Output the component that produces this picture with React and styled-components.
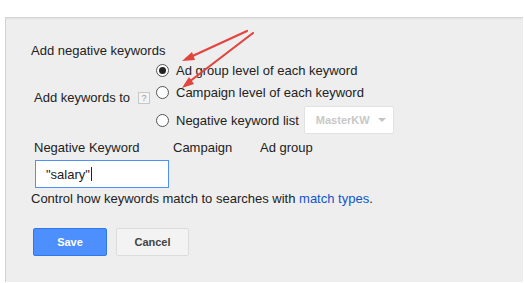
import React from 'react';
import styled, { createGlobalStyle } from 'styled-components';

const Global = createGlobalStyle`
  html, body {
    margin: 0;
    padding: 0;
    background: #fff;
  }
  body {
    font-family: 'Liberation Sans', Arial, sans-serif;
    font-size: 13px;
    color: #222;
  }
`;

const Page = styled.div`
  width: 524px;
  height: 283px;
  box-sizing: border-box;
  padding: 17px 1px 1px 5px;
  display: flex;
`;

const Panel = styled.div`
  position: relative;
  flex: 1;
  background: #eeeeee;
  border-left: 1px solid #d2d2d2;
  border-top: 1px solid #d6d6d6;
  box-shadow: inset 0 2px 2px -1px rgba(0, 0, 0, 0.06);
  padding: 25px 0 0 25px;
  display: flex;
  flex-direction: column;
`;

const Title = styled.div`
  line-height: 16px;
`;

const ChoiceBlock = styled.div`
  display: flex;
  align-items: center;
`;

const SideLabel = styled.div`
  width: 125px;
  padding-left: 3px;
  box-sizing: border-box;
  display: flex;
  align-items: center;
  gap: 8px;
  padding-top: 2px;
`;

const Help = styled.span`
  width: 10px;
  height: 10px;
  border: 1px solid #c8c8c8;
  background: #f4f4f4;
  color: #999;
  font-size: 9px;
  line-height: 10px;
  text-align: center;
  display: inline-block;
`;

const Options = styled.div`
  display: flex;
  flex-direction: column;
`;

const Option = styled.label`
  display: flex;
  align-items: center;
  gap: 7px;
  height: ${p => (p.$tall ? '28px' : '22px')};
  margin-top: ${p => (p.$tall ? '3px' : '0')};
`;

const Radio = styled.span`
  width: 11px;
  height: 11px;
  border-radius: 50%;
  border: 1px solid #555;
  background: #fff;
  display: flex;
  align-items: center;
  justify-content: center;

  &::after {
    content: '';
    width: 7px;
    height: 7px;
    border-radius: 50%;
    background: ${p => (p.$on ? '#222' : 'transparent')};
  }
`;

const Select = styled.div`
  margin-left: -2px;
  width: 90px;
  height: 28px;
  box-sizing: border-box;
  background: #fff;
  border: 1px solid #e2e2e2;
  border-radius: 2px;
  display: flex;
  align-items: center;
  padding-left: 11px;
  gap: 8px;
  color: #c8c8c8;
  font-weight: bold;
  font-size: 11px;
`;

const Caret = styled.span`
  width: 0;
  height: 0;
  border-left: 4px solid transparent;
  border-right: 4px solid transparent;
  border-top: 4px solid #c4c4c4;
`;

const Headers = styled.div`
  display: flex;
  margin-top: 6px;
  padding-left: 3px;
  line-height: 16px;
`;

const Head = styled.div`
  width: ${p => p.$w}px;
`;

const Input = styled.div`
  margin-top: 4px;
  margin-left: 4px;
  width: 134px;
  height: 28px;
  box-sizing: border-box;
  background: #fff;
  border: 1px solid #4d90fe;
  display: flex;
  align-items: center;
  padding-left: 10px;
`;

const Cursor = styled.span`
  width: 1px;
  height: 14px;
  background: #222;
  margin-left: 1px;
`;

const Hint = styled.div`
  margin-top: 3px;
  line-height: 16px;
`;

const Link = styled.a`
  color: #1155cc;
  text-decoration: none;
`;

const Buttons = styled.div`
  display: flex;
  gap: 9px;
  margin-top: 21px;
  padding-left: 2px;
`;

const Button = styled.button`
  width: ${p => (p.$primary ? '74px' : '73px')};
  height: 28px;
  border-radius: 2px;
  font-family: inherit;
  font-weight: bold;
  font-size: 11px;
  border: 1px solid ${p => (p.$primary ? '#3079ed' : '#dcdcdc')};
  background: ${p => (p.$primary ? '#4d8ffd' : '#f3f3f3')};
  color: ${p => (p.$primary ? '#fff' : '#444')};
`;

const Arrows = styled.svg`
  position: absolute;
  left: -6px;
  top: -18px;
  pointer-events: none;
`;

export default function App() {
  return (
    <Page>
      <Global />
      <Panel>
        <Title>Add negative keywords</Title>
        <ChoiceBlock>
          <SideLabel>
            Add keywords to <Help>?</Help>
          </SideLabel>
          <Options>
            <Option><Radio $on />Ad group level of each keyword</Option>
            <Option><Radio />Campaign level of each keyword</Option>
            <Option $tall>
              <Radio />Negative keyword list
              <Select>MasterKW <Caret /></Select>
            </Option>
          </Options>
        </ChoiceBlock>
        <Headers>
          <Head $w={139}>Negative Keyword</Head>
          <Head $w={87}>Campaign</Head>
          <Head $w={80}>Ad group</Head>
        </Headers>
        <Input>"salary"<Cursor /></Input>
        <Hint>
          Control how keywords match to searches with <Link href="#">match types</Link>.
        </Hint>
        <Buttons>
          <Button $primary>Save</Button>
          <Button>Cancel</Button>
        </Buttons>
        <Arrows width="300" height="120" viewBox="0 0 300 120">
          <g stroke="#e2453f" strokeWidth="2.2" fill="none" strokeLinecap="round">
            <line x1="247" y1="31" x2="186" y2="59" />
            <line x1="253" y1="33" x2="185" y2="85" />
          </g>
          <g fill="#e2453f">
            <polygon points="182,61 192,52 195,60" />
            <polygon points="182,88 189,77 194,84" />
          </g>
        </Arrows>
      </Panel>
    </Page>
  );
}
